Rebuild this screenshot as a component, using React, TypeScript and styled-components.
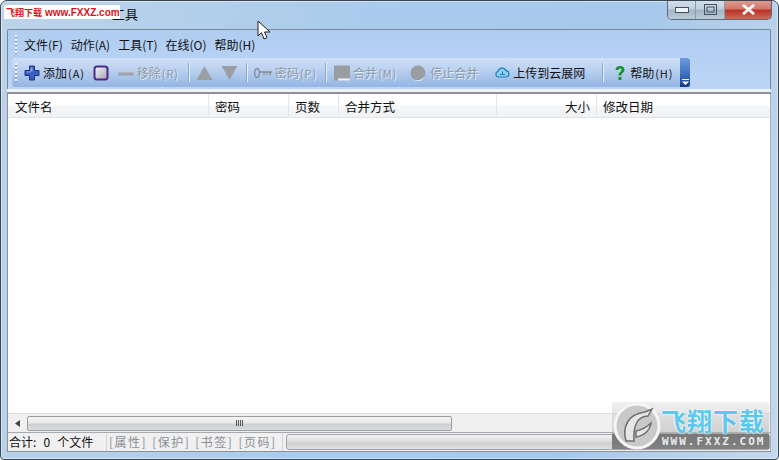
import * as React from 'react'
import styled, { createGlobalStyle } from 'styled-components'

const GlobalStyle = createGlobalStyle`
  html, body {
    margin: 0;
    padding: 0;
    background: #fff;
  }
  body {
    font-family: "Noto Sans CJK SC", "Liberation Sans", sans-serif;
    font-size: 12px;
    color: #111;
  }
`

const Window = styled.div`
  position: relative;
  box-sizing: border-box;
  width: 779px;
  height: 460px;
  overflow: hidden;
  display: flex;
  flex-direction: column;
  padding: 0 7px 7px 6px;
  border: 1px solid #3c4650;
  border-radius: 7px 7px 4px 4px;
  box-shadow: inset 0 0 0 1px rgba(255, 255, 255, 0.45);
  background: linear-gradient(100deg, #bcd3e9 0%, #a9cbec 45%, #a6c8ea 75%, #c3d8ec 100%);
`

const TitleBar = styled.div`
  flex: none;
  height: 28px;
  display: flex;
  align-items: flex-start;
  justify-content: space-between;
`

const Title = styled.div`
  padding: 4px 0 0 105px;
  font-size: 13px;
  line-height: 18px;
  color: #111;
`

const Controls = styled.div`
  display: flex;
  height: 19px;
  margin: -1px -1px 0 0;
  border: 1px solid #5d6a78;
  border-top: none;
  border-radius: 0 0 5px 5px;
  overflow: hidden;
`

const ControlButton = styled.div<{ $w: number; $close?: boolean }>`
  width: ${p => p.$w}px;
  display: flex;
  align-items: center;
  justify-content: center;
  border-right: ${p => (p.$close ? 'none' : '1px solid #8b99a8')};
  background: ${p =>
    p.$close
      ? 'linear-gradient(#e0a094 0%, #d0796c 45%, #bb3328 55%, #cf6a58 100%)'
      : 'linear-gradient(#d5e1ec 0%, #c0d0df 45%, #a3b5c7 55%, #bccbd9 100%)'};
`

const Rebar = styled.div`
  flex: none;
  height: 60px;
  box-sizing: border-box;
  border: 1px solid #76889c;
  border-bottom: none;
  border-radius: 2px 2px 0 0;
  background: linear-gradient(#b0cdf0, #bcd5f6);
  display: flex;
  flex-direction: column;
`

const MenuBar = styled.div`
  flex: none;
  height: 28px;
  display: flex;
  align-items: center;
  padding: 2px 0 0 7px;
  gap: 8px;
  box-sizing: border-box;
`

const Grip = styled.span`
  flex: none;
  width: 2px;
  height: 20px;
  margin-right: -1px;
  background: repeating-linear-gradient(#f2f7fd 0 2px, #7d95b4 2px 3px, transparent 3px 4px);
`

const ToolGrip = styled(Grip)`
  margin-right: 0;
`

const MenuItem = styled.span`
  line-height: 16px;
  color: #111;
`

const ToolBar = styled.div`
  flex: none;
  width: 678px;
  height: 29px;
  margin-left: 4px;
  box-sizing: border-box;
  display: flex;
  align-items: center;
  padding-left: 3px;
  border-radius: 3px 0 0 3px;
  background: linear-gradient(#cfe0f7 0%, #bdd3f1 35%, #94b5e2 100%);
`

const ToolButton = styled.div<{ $disabled?: boolean; $ml?: number }>`
  flex: none;
  display: flex;
  align-items: center;
  gap: 3px;
  margin-left: ${p => p.$ml ?? 0}px;
  color: ${p => (p.$disabled ? '#8e9aa8' : '#111')};
  text-shadow: ${p => (p.$disabled ? '1px 1px 0 #e3ecf8' : 'none')};
  white-space: nowrap;
`

const Key = styled.small`
  font-size: 11px;
  letter-spacing: 0.9px;
  margin-left: -2px;
`

const ToolSep = styled.span<{ $ml: number }>`
  flex: none;
  width: 1px;
  height: 19px;
  margin-left: ${p => p.$ml}px;
  background: #8aa6cc;
  box-shadow: 1px 0 0 #e5effb;
`

const Chevron = styled.div`
  flex: none;
  width: 10px;
  height: 29px;
  margin-left: auto;
  display: flex;
  align-items: flex-end;
  justify-content: center;
  padding-bottom: 2px;
  box-sizing: border-box;
  border-radius: 0 3px 3px 0;
  background: linear-gradient(#6d9bdd, #3a6cbc 60%, #153a80);
`

const Gutter = styled.div`
  flex: none;
  height: 5px;
  box-sizing: border-box;
  background: #eef3f9;
  border-bottom: 2px solid #8c9199;
`

const ListArea = styled.div`
  flex: 1;
  min-height: 0;
  display: flex;
  flex-direction: column;
  background: #fff;
  border-left: 1px solid #8c9199;
  border-right: 1px solid #a9b2bc;
`

const HeaderRow = styled.div`
  flex: none;
  height: 24px;
  display: flex;
  box-sizing: border-box;
  border-bottom: 1px solid #e0e3e8;
  background: linear-gradient(#fff 0%, #fff 45%, #f3f5f7 55%, #f1f2f4 100%);
`

const HeaderCell = styled.div<{ $w?: number; $right?: boolean; $first?: boolean }>`
  box-sizing: border-box;
  flex: ${p => (p.$w ? `0 0 ${p.$w}px` : '1')};
  padding: 0 6px 0 ${p => (p.$first ? 7 : 6)}px;
  line-height: 25px;
  font-size: 12.5px;
  text-align: ${p => (p.$right ? 'right' : 'left')};
  border-right: ${p => (p.$w ? '1px solid #e3e6ea' : 'none')};
`

const ListBody = styled.div`
  flex: 1;
`

const ScrollBar = styled.div`
  flex: none;
  height: 19px;
  display: flex;
  align-items: center;
  box-sizing: border-box;
  padding: 1px 0;
  background: #f0f0f0;
  border-top: 1px solid #dfdfdf;
`

const ArrowBox = styled.div`
  flex: 0 0 19px;
  display: flex;
  justify-content: center;
  color: #444;
`

const ScrollThumb = styled.div`
  flex: 0 0 425px;
  height: 15px;
  display: flex;
  align-items: center;
  justify-content: center;
  gap: 1px;
  box-sizing: border-box;
  border: 1px solid #9a9da2;
  border-radius: 2px;
  background: linear-gradient(#f4f4f4 0%, #e7e7e8 45%, #cfd0d2 55%, #dadbdd 100%);
`

const ThumbLine = styled.span`
  width: 1px;
  height: 6px;
  background: #555;
`

const StatusBar = styled.div`
  flex: none;
  height: 20px;
  display: flex;
  align-items: center;
  background: #f0f0f0;
  border-top: 1px solid #a5abb3;
  border-left: 1px solid #8c9199;
  border-right: 1px solid #a9b2bc;
  border-bottom: 1px solid #8c9199;
  box-sizing: border-box;
  overflow: hidden;
`

const StatusTotal = styled.div`
  flex: 0 0 99px;
  font-size: 12px;
  word-spacing: 4.500px;
  white-space: nowrap;
  border-right: 1px solid #d4d4d4;
  line-height: 18px;
  box-sizing: border-box;
  padding-left: 1px;
`

const StatusTags = styled.div`
  flex: 0 0 176px;
  padding-left: 2px;
  display: flex;
  gap: 5px;
  font-size: 12px;
  letter-spacing: 1.500px;
  line-height: 18px;
  color: #8b8f94;
  white-space: nowrap;
  border-right: 1px solid #d4d4d4;
  box-sizing: border-box;
`

const Progress = styled.div`
  flex: 1;
  height: 14px;
  margin: 0 0 0 3px;
  border: 1px solid #a0a4a9;
  border-radius: 3px;
  background: linear-gradient(#f1f1f1, #dcdcdc 50%, #cfcfcf 55%, #e0e0e0);
`

const TopMark = styled.div`
  position: absolute;
  left: 3px;
  top: 4px;
  width: 116px;
  height: 14px;
  display: flex;
  align-items: center;
  padding-left: 2px;
  box-sizing: border-box;
  gap: 3px;
  background: #fff;
  color: #d9141c;
  font-size: 9px;
  font-weight: 700;
  white-space: nowrap;
`

const TopMarkUrl = styled.span`
  font-family: "Liberation Sans", sans-serif;
  font-size: 10px;
`

const Pointer = styled.svg`
  position: absolute;
  left: 256px;
  top: 19px;
`

const Badge = styled.div`
  position: absolute;
  left: 611px;
  top: 401px;
  width: 157px;
  height: 47px;
  background: linear-gradient(rgba(225, 225, 225, 0.5) 0%, rgba(195, 195, 195, 0.7) 64%, rgba(100, 100, 100, 0.85) 70%, rgba(115, 115, 115, 0.85) 100%);
`

const BadgeLogo = styled.svg`
  position: absolute;
  left: 1px;
  top: -1px;
`

const BadgeTitle = styled.div`
  position: absolute;
  left: 49px;
  top: 3px;
  font-size: 25px;
  line-height: 30px;
  font-weight: 700;
  letter-spacing: 1px;
  color: #5cc8ee;
  white-space: nowrap;
  text-shadow: 0 0 2px #fff, 0 0 2px #fff;
`

const BadgeUrl = styled.div`
  position: absolute;
  left: 50px;
  top: 33px;
  font-family: "DejaVu Sans Mono", "Liberation Mono", monospace;
  font-size: 11px;
  font-weight: 700;
  letter-spacing: 2px;
  line-height: 13px;
  color: #e8eaec;
  white-space: nowrap;
`

const PlusIcon = () => (
  <svg width="16" height="16" viewBox="0 0 16 16">
    <path d="M5.500 1h5v4.500H15v5h-4.500V15h-5v-4.500H1v-5h4.500z" fill="#3b5fc0" stroke="#1f2f80" strokeWidth="1" />
    <path d="M6.500 2.500h2v4h-2zM2.500 6.500h4v1h-4z" fill="#8ea8ea" />
  </svg>
)

const StopIcon = () => (
  <svg width="16" height="16" viewBox="0 0 16 16">
    <defs>
      <linearGradient id="stopFill" x1="0" y1="0" x2="1" y2="1">
        <stop offset="0" stopColor="#eeeef2" />
        <stop offset="1" stopColor="#a9abb8" />
      </linearGradient>
    </defs>
    <rect x="0.500" y="0.500" width="15" height="15" rx="3.500" fill="#4b2a86" />
    <rect x="2.500" y="2.500" width="11" height="11" rx="1.500" fill="url(#stopFill)" />
  </svg>
)

const MinusIcon = () => (
  <svg width="16" height="16" viewBox="0 0 16 16">
    <rect x="0.500" y="6" width="15" height="4.500" fill="#9da4ad" />
    <rect x="0.500" y="6" width="15" height="1.500" fill="#c8ccd2" />
  </svg>
)

const TriangleIcon = ({ down }: { down?: boolean }) => (
  <svg width="17" height="16" viewBox="0 0 17 16">
    <path d={down ? 'M0.500 1h16L8.500 15z' : 'M8.500 1l8 14H0.500z'} fill="#9b9fa4" />
  </svg>
)

const KeyIcon = () => (
  <svg width="18" height="12" viewBox="0 0 18 12" fill="none" stroke="#858b94" strokeWidth="1.300">
    <ellipse cx="3" cy="6" rx="2.300" ry="4.500" />
    <path d="M5 5h13M10 5v3M13 5v2.500M16 5v3" />
  </svg>
)

const SquareIcon = () => (
  <svg width="16" height="16" viewBox="0 0 16 16">
    <rect x="0" y="0.500" width="16" height="15" fill="#9a9ea3" />
    <rect x="4" y="13.500" width="12" height="2" fill="#f1f4f9" />
  </svg>
)

const CircleIcon = () => (
  <svg width="17" height="16" viewBox="0 0 17 16">
    <circle cx="8" cy="8" r="7.500" fill="#9a9ea3" />
    <path d="M4 14.500a7.500 7.500 0 0 0 10-3 6 6 0 0 1-10 3z" fill="#eef2f8" />
  </svg>
)

const CloudIcon = () => (
  <svg width="15" height="11" viewBox="0 0 15 11">
    <path
      d="M3.500 10A2.800 2.800 0 0 1 3 4.500 4.200 4.200 0 0 1 11 3.700 3.200 3.200 0 0 1 11.500 10z"
      fill="#8fd0ee"
      stroke="#1f7fc0"
      strokeWidth="1.200"
    />
    <path d="M5 7.500h5M7.500 4.500v3" stroke="#1f7fc0" strokeWidth="1" />
  </svg>
)

const QuestionIcon = () => (
  <svg width="13" height="16" viewBox="0 0 13 16">
    <path
      d="M1.500 5C1.500 2.500 3.500 1 6 1s4.500 1.500 4.500 3.800c0 3-3.200 3-3.200 5.700H4.500c0-3.600 3-3.700 3-5.600C7.500 4 6.900 3.500 6 3.500S4.500 4.100 4.400 5z"
      fill="#14902c"
    />
    <rect x="4.500" y="12" width="2.900" height="3" fill="#14902c" />
  </svg>
)

const columns = [
  { label: '文件名', w: 201 },
  { label: '密码', w: 80 },
  { label: '页数', w: 50 },
  { label: '合并方式', w: 158 },
  { label: '大小', w: 100, right: true },
  { label: '修改日期' }
]

const menus = ['文件(F)', '动作(A)', '工具(T)', '在线(O)', '帮助(H)']
const tags = ['[属性]', '[保护]', '[书签]', '[页码]']

const App: React.FC = () => (
  <Window>
    <GlobalStyle />
    <TitleBar>
      <Title>工具</Title>
      <Controls>
        <ControlButton $w={27}>
          <svg width="14" height="6" viewBox="0 0 14 6">
            <rect x="0.500" y="0.500" width="13" height="5" fill="#eef3f8" stroke="#44505c" />
          </svg>
        </ControlButton>
        <ControlButton $w={28}>
          <svg width="13" height="11" viewBox="0 0 13 11">
            <rect x="0.500" y="0.500" width="12" height="10" fill="none" stroke="#44505c" />
            <rect x="3" y="3" width="7" height="5" fill="none" stroke="#44505c" />
          </svg>
        </ControlButton>
        <ControlButton $w={46} $close>
          <svg width="15" height="11" viewBox="0 0 15 11">
            <path d="M2 1l11 9M13 1L2 10" stroke="#fff" strokeWidth="2.800" />
          </svg>
        </ControlButton>
      </Controls>
    </TitleBar>

    <Rebar>
      <MenuBar>
        <Grip />
        {menus.map(m => (
          <MenuItem key={m}>{m}</MenuItem>
        ))}
      </MenuBar>
      <ToolBar>
        <ToolGrip />
        <ToolButton $ml={7}>
          <PlusIcon />
          添加<Key>(A)</Key>
        </ToolButton>
        <ToolButton $ml={8}>
          <StopIcon />
        </ToolButton>
        <ToolButton $ml={9} $disabled>
          <MinusIcon />
          移除<Key>(R)</Key>
        </ToolButton>
        <ToolSep $ml={9} />
        <ToolButton $ml={7}>
          <TriangleIcon />
        </ToolButton>
        <ToolButton $ml={8}>
          <TriangleIcon down />
        </ToolButton>
        <ToolSep $ml={8} />
        <ToolButton $ml={7} $disabled>
          <KeyIcon />
          密码<Key>(P)</Key>
        </ToolButton>
        <ToolSep $ml={8} />
        <ToolButton $ml={8} $disabled>
          <SquareIcon />
          合并<Key>(M)</Key>
        </ToolButton>
        <ToolButton $ml={13} $disabled>
          <CircleIcon />
          停止合并
        </ToolButton>
        <ToolButton $ml={17}>
          <CloudIcon />
          上传到云展网
        </ToolButton>
        <ToolSep $ml={17} />
        <ToolButton $ml={11}>
          <QuestionIcon />
          帮助<Key>(H)</Key>
        </ToolButton>
        <Chevron>
          <svg width="7" height="6" viewBox="0 0 7 6">
            <path d="M0 0h7v1H0zM0 2.500h7L3.500 6z" fill="#fff" />
          </svg>
        </Chevron>
      </ToolBar>
    </Rebar>
    <Gutter />

    <ListArea>
      <HeaderRow>
        {columns.map((c, i) => (
          <HeaderCell key={c.label} $w={c.w} $right={c.right} $first={i === 0}>
            {c.label}
          </HeaderCell>
        ))}
      </HeaderRow>
      <ListBody />
      <ScrollBar>
        <ArrowBox>
          <svg width="5" height="7" viewBox="0 0 5 7">
            <path d="M5 0v7L0 3.500z" fill="#444" />
          </svg>
        </ArrowBox>
        <ScrollThumb>
          <ThumbLine />
          <ThumbLine />
          <ThumbLine />
          <ThumbLine />
        </ScrollThumb>
      </ScrollBar>
    </ListArea>

    <StatusBar>
      <StatusTotal>合计: 0 个文件</StatusTotal>
      <StatusTags>
        {tags.map(t => (
          <span key={t}>{t}</span>
        ))}
      </StatusTags>
      <Progress />
    </StatusBar>

    <TopMark>
      <span>飞翔下载</span>
      <TopMarkUrl>www.FXXZ.com</TopMarkUrl>
    </TopMark>

    <Pointer width="15" height="21" viewBox="0 0 15 21">
      <path d="M1 1v15l3.500-3.300L7 19l3-1.300-2.500-5.700H13z" fill="#fff" stroke="#222" strokeWidth="1" />
    </Pointer>

    <Badge>
      <BadgeLogo width="48" height="50" viewBox="0 0 48 50">
        <circle cx="24" cy="25" r="22" fill="#c9c9c9" stroke="#f6f6f6" strokeWidth="3" />
        <path d="M13 40C9 26 15 13 32 11l7-3-4 7C24 15 20 26 21 40z" fill="#e6e6e6" stroke="#6f6f6f" strokeWidth="1.500" />
        <path d="M23 30c5-1 10-3 15-8-1 7-7 13-15 14z" fill="#e6e6e6" stroke="#6f6f6f" strokeWidth="1.500" />
      </BadgeLogo>
      <BadgeTitle>飞翔下载</BadgeTitle>
      <BadgeUrl>WWW.FXXZ.COM</BadgeUrl>
    </Badge>
  </Window>
)

export default App
